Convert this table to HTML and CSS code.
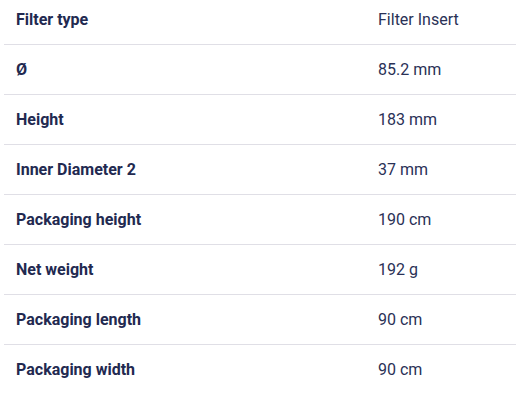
FILE: index.html
```html
<!DOCTYPE html>
<html>
<head>
<meta charset="utf-8">
<link rel="stylesheet" href="styles.css">
</head>
<body>
<table class="specs">
  <tbody>
    <tr><th>Filter type</th><td>Filter Insert</td></tr>
    <tr><th>Ø</th><td>85.2 mm</td></tr>
    <tr><th>Height</th><td>183 mm</td></tr>
    <tr><th>Inner Diameter 2</th><td>37 mm</td></tr>
    <tr><th>Packaging height</th><td>190 cm</td></tr>
    <tr><th>Net weight</th><td>192 g</td></tr>
    <tr><th>Packaging length</th><td>90 cm</td></tr>
    <tr><th>Packaging width</th><td>90 cm</td></tr>
  </tbody>
</table>
</body>
</html>
```
FILE: styles.css
```css
html, body {
  margin: 0;
  padding: 0;
  background: #ffffff;
  overflow: hidden;
}
body {
  font-family: Roboto, "Liberation Sans", sans-serif;
  color: #222950;
  font-size: 16px;
}
.specs {
  margin: -6px 0 0 4px;
  width: 512px;
  border-collapse: collapse;
}
.specs tr {
  height: 50px;
  border-bottom: 1px solid #e0dfe6;
}
.specs tr:last-child {
  border-bottom: none;
}
.specs th,
.specs td {
  padding: 2px 0 0;
  text-align: left;
  vertical-align: middle;
  line-height: 20px;
}
.specs th {
  width: 362px;
  padding-left: 12px;
  font-weight: 700;
}
.specs td {
  font-weight: 400;
  color: #2a3156;
}
```
